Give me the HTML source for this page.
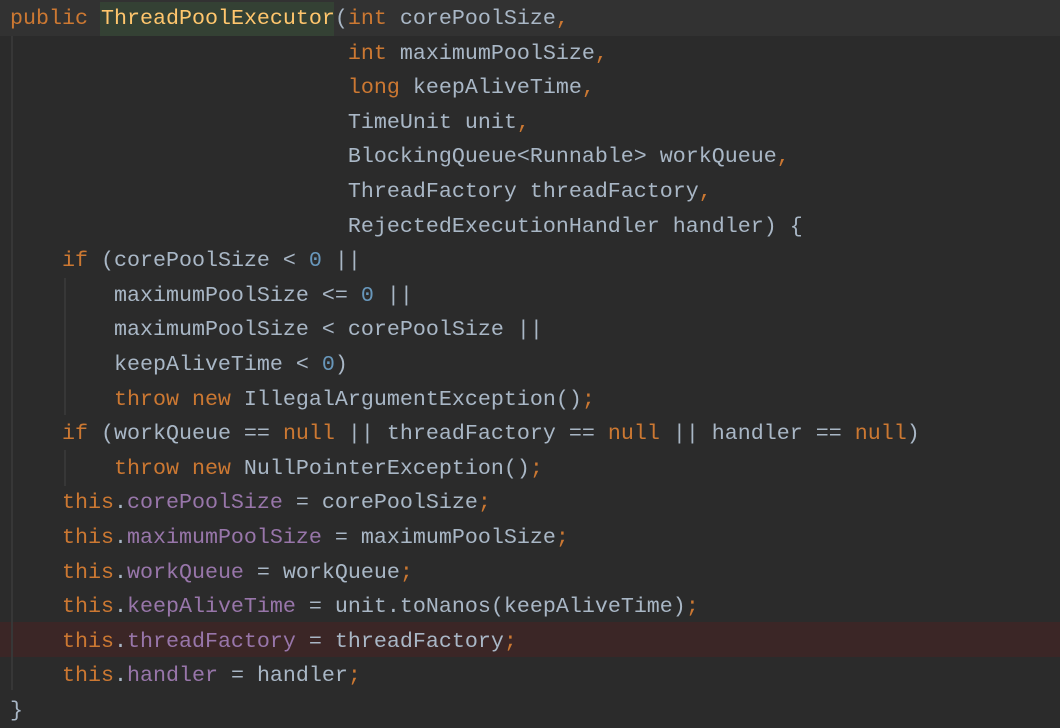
<!DOCTYPE html>
<html><head><meta charset="utf-8"><style>
html,body{margin:0;padding:0;background:#2b2b2b;width:1060px;height:728px;overflow:hidden;position:relative}
.code{position:absolute;left:10px;top:2px;font-family:"Liberation Mono",monospace;font-size:21.67px;line-height:34.6px;color:#a9b7c6;white-space:pre;z-index:2}
.k{color:#cc7832}.n{color:#6897bb}.f{color:#9876aa}.m{color:#ffc66d}
.bg{position:absolute;left:0;width:1060px}
.g{position:absolute;width:2px;background:#373737}
</style></head><body>
<div class="bg" style="top:0;height:36px;background:#323232"></div>
<div style="position:absolute;left:100px;top:2px;width:234px;height:34px;background:#344134"></div>
<div class="bg" style="top:622px;height:35px;background:#3b2626"></div>
<div class="g" style="left:11px;top:36px;height:654px"></div>
<div class="g" style="left:64px;top:278px;height:137px"></div>
<div class="g" style="left:64px;top:450px;height:36px"></div>
<div class="code"><span class="k">public</span> <span class="m">ThreadPoolExecutor</span>(<span class="k">int</span> corePoolSize<span class="k">,</span>
                          <span class="k">int</span> maximumPoolSize<span class="k">,</span>
                          <span class="k">long</span> keepAliveTime<span class="k">,</span>
                          TimeUnit unit<span class="k">,</span>
                          BlockingQueue&lt;Runnable&gt; workQueue<span class="k">,</span>
                          ThreadFactory threadFactory<span class="k">,</span>
                          RejectedExecutionHandler handler) {
    <span class="k">if</span> (corePoolSize &lt; <span class="n">0</span> ||
        maximumPoolSize &lt;= <span class="n">0</span> ||
        maximumPoolSize &lt; corePoolSize ||
        keepAliveTime &lt; <span class="n">0</span>)
        <span class="k">throw new</span> IllegalArgumentException()<span class="k">;</span>
    <span class="k">if</span> (workQueue == <span class="k">null</span> || threadFactory == <span class="k">null</span> || handler == <span class="k">null</span>)
        <span class="k">throw new</span> NullPointerException()<span class="k">;</span>
    <span class="k">this</span>.<span class="f">corePoolSize</span> = corePoolSize<span class="k">;</span>
    <span class="k">this</span>.<span class="f">maximumPoolSize</span> = maximumPoolSize<span class="k">;</span>
    <span class="k">this</span>.<span class="f">workQueue</span> = workQueue<span class="k">;</span>
    <span class="k">this</span>.<span class="f">keepAliveTime</span> = unit.toNanos(keepAliveTime)<span class="k">;</span>
    <span class="k">this</span>.<span class="f">threadFactory</span> = threadFactory<span class="k">;</span>
    <span class="k">this</span>.<span class="f">handler</span> = handler<span class="k">;</span>
}</div>
</body></html>
